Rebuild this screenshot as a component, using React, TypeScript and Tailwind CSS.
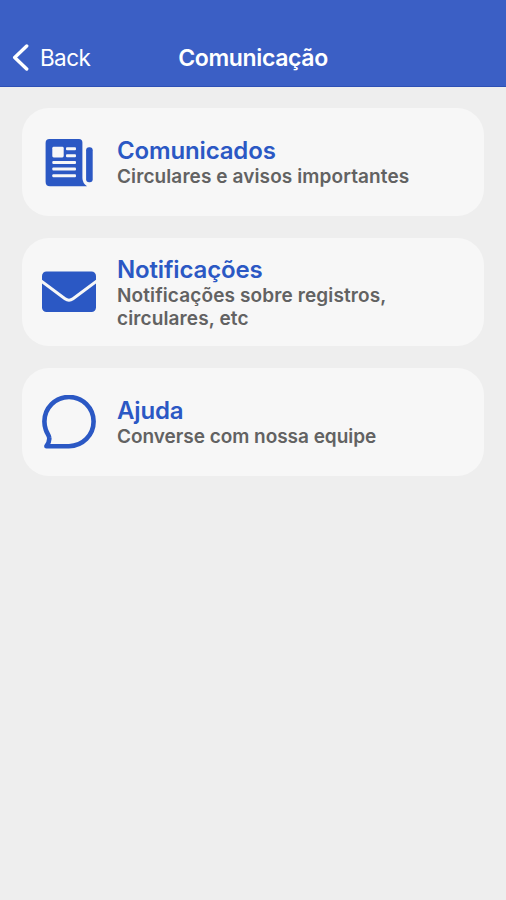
import type { ReactNode } from "react";

interface MenuItem {
  title: string;
  description: string;
  icon: ReactNode;
  descriptionClass: string;
}

const MENU_ITEMS: MenuItem[] = [
  {
    title: "Comunicados",
    description: "Circulares e avisos importantes",
    descriptionClass: "tracking-[0.1px]",
    icon: (
      <svg viewBox="0 0 54 54" className="size-[54px]" fill="currentColor">
        <path d="M7.5 4 H37 Q40.4 4 40.4 7.5 V43 Q40.4 48 45 51.2 H8 Q3.6 51.2 3.6 46.7 V8 Q3.6 4 7.5 4 Z" />
        <rect x="44.1" y="12.3" width="6.6" height="35" rx="3" />
        <g fill="#f7f7f7">
          <rect x="10.3" y="11.8" width="11.4" height="10.6" rx="1.4" />
          <rect x="24" y="12.2" width="10" height="3" rx="1" />
          <rect x="24" y="19.2" width="10" height="3" rx="1" />
          <rect x="10.3" y="26" width="23.7" height="3" rx="1" />
          <rect x="10.3" y="32.5" width="23.7" height="3" rx="1" />
          <rect x="10.3" y="39.2" width="23.7" height="3" rx="1" />
        </g>
      </svg>
    ),
  },
  {
    title: "Notificações",
    description: "Notificações sobre registros, circulares, etc",
    descriptionClass: "tracking-[0.12px]",
    icon: (
      <svg viewBox="0 0 54 54" className="size-[54px]">
        <rect y="6.5" width="54" height="40.5" rx="4.5" fill="currentColor" />
        <path d="M-1 16 L23 33.8 Q27 36.7 31 33.8 L55 16" fill="none" stroke="#f7f7f7" strokeWidth="3" strokeLinejoin="round" />
      </svg>
    ),
  },
  {
    title: "Ajuda",
    description: "Converse com nossa equipe",
    descriptionClass: "tracking-[-0.03px]",
    icon: (
      <svg viewBox="0 0 54 54" className="size-[54px]">
        <path
          d="M4.4 51.2 C6.6 48.4 7.6 45.5 7.2 42.6 C7 40.6 4.8 38 3.8 34.8 C2.9 32.2 2.4 29.6 2.4 26.6 A24.6 24.6 0 1 1 27 51.2 Z"
          fill="none"
          stroke="currentColor"
          strokeWidth="4.6"
          strokeLinejoin="round"
        />
      </svg>
    ),
  },
];

function MenuCard({ item }: { item: MenuItem }) {
  return (
    <button className="flex h-[108px] w-full items-center rounded-[27px] bg-[#f7f7f7] pl-5 text-left">
      <span className="w-[75px] shrink-0 text-[#2b58c4]">{item.icon}</span>
      <span className="w-[300px] pt-px">
        <span className="block text-[24px] leading-[28px] font-semibold tracking-[-0.15px] text-[#2b58c4]">
          {item.title}
        </span>
        <span className={`block text-[19px] leading-[23px] font-semibold text-[#626262] ${item.descriptionClass}`}>
          {item.description}
        </span>
      </span>
    </button>
  );
}

export default function App() {
  return (
    <div className="min-h-[900px] bg-[#eeeeee] font-['Inter',sans-serif]">
      <header className="grid h-[87px] grid-cols-[1fr_auto_1fr] border-b border-[#2d50b5] bg-[#3b5fc5] pt-[29px] text-white">
        <button className="flex items-center gap-[11px] pl-3 text-[22.5px] tracking-[-0.6px]">
          <svg
            viewBox="0 0 17 28"
            className="h-7 w-[17px]"
            fill="none"
            stroke="currentColor"
            strokeWidth="3.4"
            strokeLinecap="round"
            strokeLinejoin="round"
          >
            <path d="M14.7 2 L2.7 13.5 L14.7 25" />
          </svg>
          Back
        </button>
        <h1 className="self-center pt-px text-[23px] font-semibold tracking-[-0.35px]">Comunicação</h1>
      </header>
      <main className="flex flex-col gap-[22px] px-[22px] pt-[21px]">
        {MENU_ITEMS.map((item) => (
          <MenuCard key={item.title} item={item} />
        ))}
      </main>
    </div>
  );
}
